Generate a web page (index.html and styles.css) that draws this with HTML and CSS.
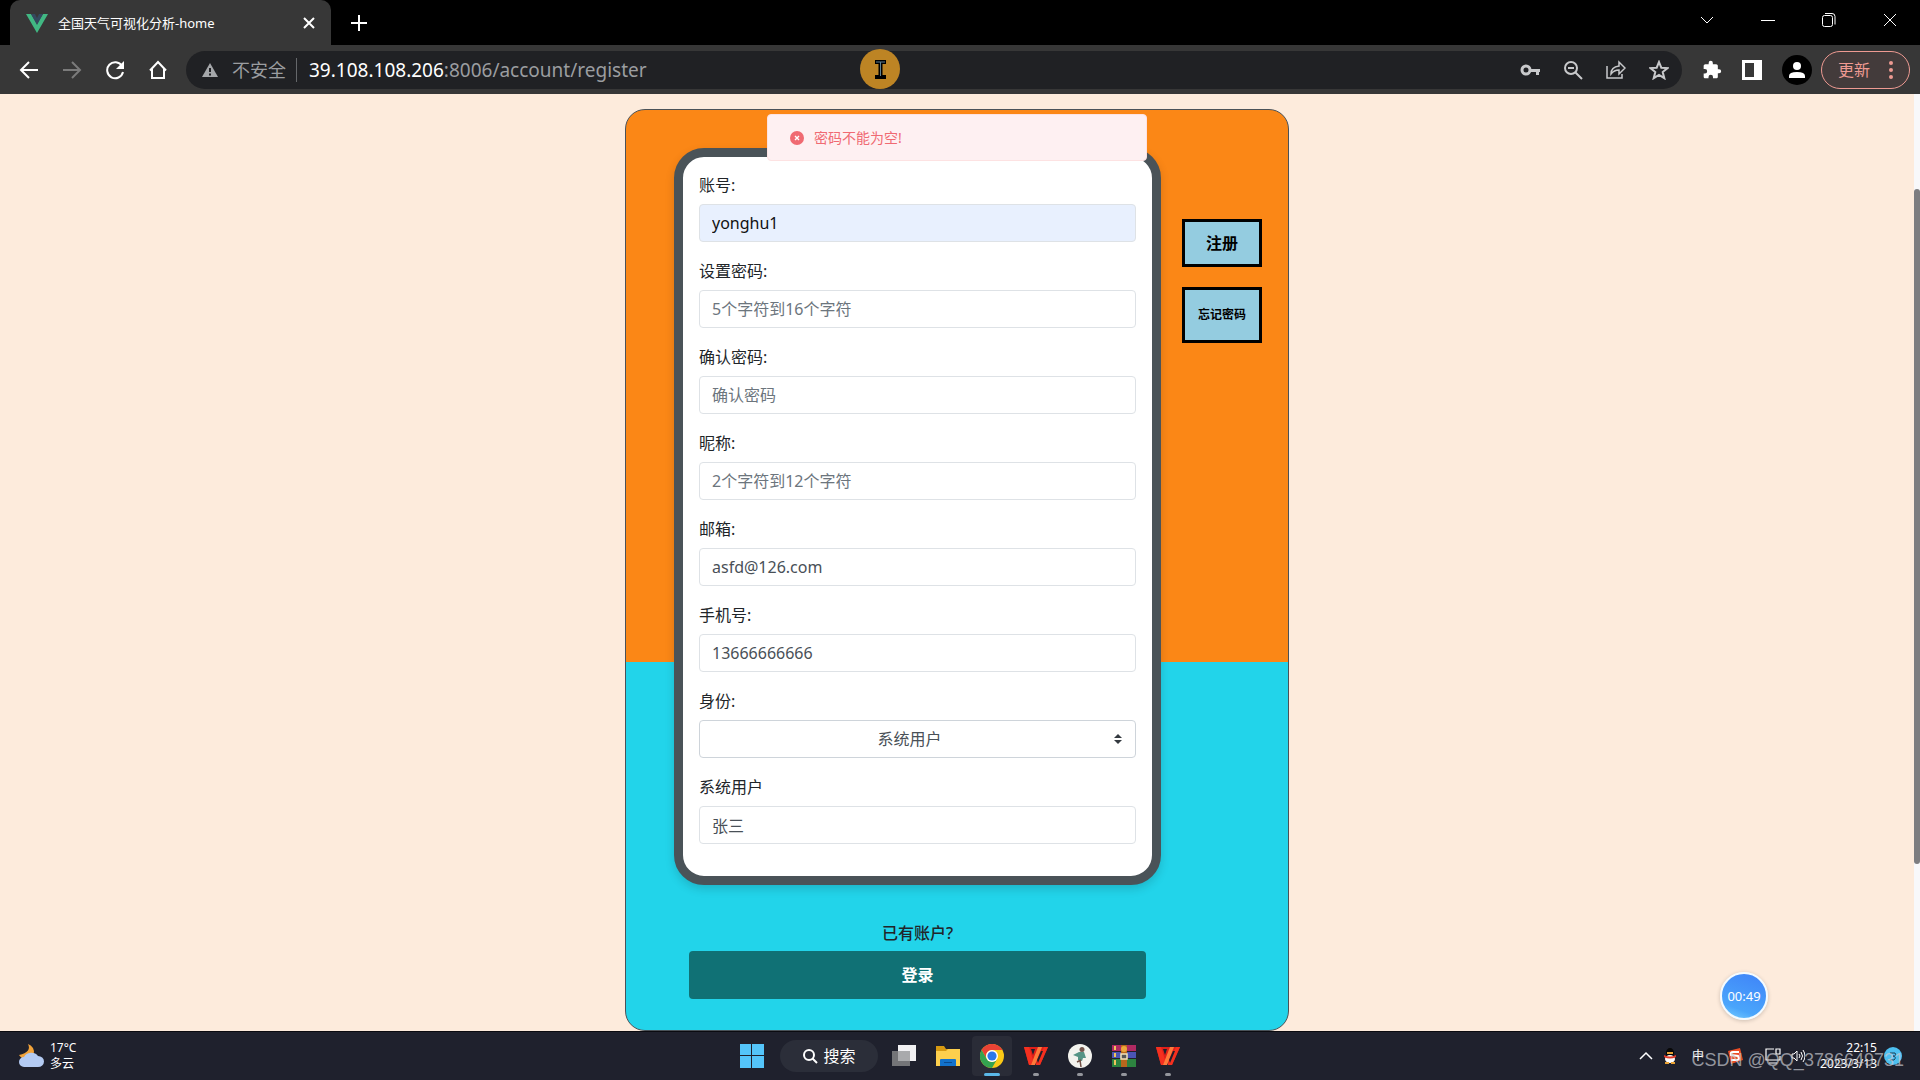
FILE: index.html
```html
<!DOCTYPE html>
<html lang="zh-CN">
<head>
<meta charset="utf-8">
<title>全国天气可视化分析-home</title>
<link rel="stylesheet" href="styles.css">
</head>
<body>
<svg class="defs" aria-hidden="true">
  <symbol id="wps" viewBox="0 0 24 24"><path d="M0 3h24l-8 18h-4l-1-5-2 5H5z" fill="#e0201a"/><path d="M0 3h5l4 13-2 5H5z" fill="#f5301f"/><path d="M7 21 14 3h4l-7 18z" fill="#ff7a3a"/><path d="M12 21 20 3h4l-8 18z" fill="#f5301f"/><path d="M7 5h4L9 11zM17 7l-4 9 1 3 5-12z" fill="#1f212d"/></symbol>
</svg>
<header class="browser">
  <div class="tabstrip">
    <div class="tab">
      <svg width="22" height="20" viewBox="0 0 22 20"><path d="M0 1h5l6 10 6-10h5L11 20z" fill="#41b883"/><path d="M5 1h4l2 4 2-4h4L11 12z" fill="#34495e"/></svg>
      <span class="tab-title">全国天气可视化分析-home</span>
      <button class="icon" aria-label="关闭标签"><svg width="12" height="12" viewBox="0 0 12 12"><path d="M1 1l10 10M11 1 1 11" stroke="#fff" stroke-width="2"/></svg></button>
    </div>
    <button class="icon newtab" aria-label="新标签"><svg width="16" height="16" viewBox="0 0 16 16"><path d="M8 0v16M0 8h16" stroke="#fff" stroke-width="2"/></svg></button>
    <div class="window-buttons">
      <button class="icon" aria-label="标签列表"><svg width="14" height="14" viewBox="0 0 14 14"><path d="M1 4l6 6 6-6"/></svg></button>
      <button class="icon" aria-label="最小化"><svg width="14" height="14" viewBox="0 0 14 14"><path d="M0 7.500h14"/></svg></button>
      <button class="icon" aria-label="还原"><svg width="14" height="14" viewBox="0 0 14 14"><rect x=".5" y="2.500" width="10" height="11" rx="2"/><path d="M3 .5h7q3 0 3 3v8"/></svg></button>
      <button class="icon" aria-label="关闭"><svg width="14" height="14" viewBox="0 0 14 14"><path d="M1 1l12 12M13 1 1 13"/></svg></button>
    </div>
  </div>
  <div class="toolbar">
    <nav class="nav-buttons">
      <button class="icon" aria-label="后退"><svg width="20" height="20" viewBox="0 0 20 20"><path d="M19 10H2M10 2l-8 8 8 8" stroke="#fff" stroke-width="2" fill="none"/></svg></button>
      <button class="icon" aria-label="前进"><svg width="20" height="20" viewBox="0 0 20 20"><path d="M1 10h17M10 2l8 8-8 8" stroke="#7b7b7b" stroke-width="2" fill="none"/></svg></button>
      <button class="icon" aria-label="刷新"><svg width="20" height="20" viewBox="0 0 20 20"><path d="M17 6A8 8 0 1 0 18 12" stroke="#fff" stroke-width="2" fill="none"/><path d="M19 1v8h-8z" fill="#fff"/></svg></button>
      <button class="icon" aria-label="主页"><svg width="20" height="20" viewBox="0 0 20 20"><path d="M2 10.500 10 2l8 8.500M4 9V18h12V9" stroke="#fff" stroke-width="2" fill="none"/></svg></button>
    </nav>
    <div class="omnibox">
      <svg width="16" height="16" viewBox="0 0 16 16"><path d="M8 1l8 14H0z" fill="#a5a7aa"/><path d="M8 6v4M8 11.500v2" stroke="#202124" stroke-width="2"/></svg>
      <span class="insecure">不安全</span>
      <span class="url"><b>39.108.108.206</b>:8006/account/register</span>
      <div class="omni-icons">
        <button class="icon" aria-label="密码"><svg width="20" height="20" viewBox="0 0 20 20"><circle cx="6" cy="10" r="4" fill="none" stroke="#c8c9cb" stroke-width="3"/><path d="M10 9h10v3h-1v3h-3v-3h-6z" fill="#c8c9cb"/></svg></button>
        <button class="icon" aria-label="缩小"><svg width="20" height="20" viewBox="0 0 20 20" fill="none" stroke="#c8c9cb" stroke-width="2"><circle cx="8" cy="8" r="6"/><path d="M12.500 12.500 19 19M5 8h6"/></svg></button>
        <button class="icon" aria-label="分享"><svg width="20" height="20" viewBox="0 0 20 20" fill="none" stroke="#c8c9cb" stroke-width="1.500"><path d="M1 6v12h15v-4M5 14q0-7 8-8V2l6 6-6 6v-4q-5 0-8 4z"/></svg></button>
        <button class="icon" aria-label="收藏"><svg width="20" height="20" viewBox="0 0 20 20" fill="none" stroke="#c8c9cb" stroke-width="2"><path d="M10 2l2.300 5.700 6.200.4-4.800 4 1.600 6.100L10 14.900l-5.300 3.300 1.600-6.100-4.800-4 6.200-.4z"/></svg></button>
      </div>
    </div>
    <div class="tool-icons">
      <button class="icon" aria-label="扩展"><svg width="20" height="20" viewBox="0 0 24 24"><path d="M20.500 11H19V7c0-1.100-.9-2-2-2h-4V3.500a2.500 2.500 0 0 0-5 0V5H4c-1.100 0-2 .9-2 2v3.800h1.500a2.700 2.700 0 0 1 0 5.400H2V20c0 1.100.9 2 2 2h3.800v-1.500a2.700 2.700 0 0 1 5.400 0V22H17c1.100 0 2-.9 2-2v-4h1.500a2.500 2.500 0 0 0 0-5z" fill="#fff"/></svg></button>
      <button class="icon" aria-label="侧边栏"><svg width="20" height="20" viewBox="0 0 20 20"><path d="M0 0h20v20H0zM3 3v14h9V3z" fill="#fff" fill-rule="evenodd"/></svg></button>
      <button class="icon" aria-label="用户"><svg width="30" height="30" viewBox="0 0 30 30"><circle cx="15" cy="15" r="15" fill="#000"/><circle cx="15" cy="11" r="4" fill="#fff"/><path d="M7 23v-2q0-4 8-4t8 4v2z" fill="#fff"/></svg></button>
    </div>
    <button class="update">更新<svg width="4" height="20" viewBox="0 0 4 20" fill="#ee9a92"><circle cx="2" cy="3" r="2"/><circle cx="2" cy="10" r="2"/><circle cx="2" cy="17" r="2"/></svg></button>
  </div>
  <svg class="pointer" width="40" height="40" viewBox="0 0 40 40"><circle cx="20" cy="20" r="20" fill="#bd8424"/><path d="M15 13h11M15 28h11M20.500 13v15" stroke="#000" stroke-width="4"/><path d="M16 13h9M20.500 13v14" stroke="#5d7f93" stroke-width="1"/></svg>
</header>

<div class="viewport">
  <main class="page">
    <div class="message" role="alert">
      <svg width="14" height="14" viewBox="0 0 14 14"><circle cx="7" cy="7" r="7" fill="#f06a72"/><path d="M5 5l4 4M9 5 5 9" stroke="#fff" stroke-width="1.400"/></svg>密码不能为空!
    </div>
    <section class="card">
      <form class="register">
        <div class="phone">
          <label for="account">账号:</label>
          <input id="account" class="filled" type="text" value="yonghu1">
          <label for="password">设置密码:</label>
          <input id="password" type="password" placeholder="5个字符到16个字符">
          <label for="confirm">确认密码:</label>
          <input id="confirm" type="password" placeholder="确认密码">
          <label for="nickname">昵称:</label>
          <input id="nickname" type="text" placeholder="2个字符到12个字符">
          <label for="email">邮箱:</label>
          <input id="email" type="text" value="asfd@126.com">
          <label for="mobile">手机号:</label>
          <input id="mobile" type="text" value="13666666666">
          <label for="role">身份:</label>
          <div class="select-wrap">
            <select id="role"><option>系统用户</option></select>
            <svg class="caret" width="8" height="10" viewBox="0 0 8 10"><path d="M0 4l4-4 4 4zM0 6l4 4 4-4z" fill="#343a40"/></svg>
          </div>
          <label for="name">系统用户</label>
          <input id="name" type="text" value="张三">
        </div>
        <p class="hint">已有账户?</p>
        <button type="button" class="login">登录</button>
      </form>
      <div class="actions">
        <button class="action">注册</button>
        <button class="action forgot">忘记密码</button>
      </div>
    </section>
    <div class="timer">00:49</div>
  </main>
  <div class="scrollbar"><div class="thumb"></div></div>
</div>

<footer class="taskbar">
  <div class="weather">
    <svg width="26" height="24" viewBox="0 0 26 24"><path d="M10 0q4 8-9 11 4 6 11 3 6-4 3-10-2-3-5-4z" fill="#f2a33a"/><path d="M6 23a5 5 0 0 1 0-10 8 7 0 0 1 14-1 6 5.500 0 0 1 0 11z" fill="#b4cbf3"/></svg>
    <div>17°C<br>多云</div>
  </div>
  <div class="apps">
    <button class="icon app" aria-label="开始"><svg width="24" height="24" viewBox="0 0 24 24"><path d="M0 0h11v11H0zM12 0h12v11H12zM0 12h11v12H0zM12 12h12v12H12z" fill="#54c5fa"/></svg></button>
    <button class="search"><svg width="16" height="16" viewBox="0 0 16 16" fill="none" stroke="#fff" stroke-width="2"><circle cx="7" cy="7" r="5"/><path d="M10.500 10.500 15 15"/></svg>搜索</button>
    <button class="icon app" aria-label="任务视图"><svg width="24" height="24" viewBox="0 0 24 24"><path d="M6 1h18v16H6z" fill="#f1f1f3"/><path d="M0 7h18v15H0z" fill="#747578"/><path d="M6 7h12v10H6z" fill="#a9aaac"/></svg></button>
    <button class="icon app" aria-label="文件"><svg width="24" height="24" viewBox="0 0 24 24"><path d="M0 2h8l2 3h14v4H0z" fill="#d79a12"/><path d="M0 7h10l2-2h12v17H0z" fill="#fccf4d"/><path d="M4 22v-6q0-1 1-1h14q1 0 1 1v6z" fill="#1272cc"/><path d="M8 18h8v1H8z" fill="#0a4b90"/></svg></button>
    <button class="icon app active" aria-label="Chrome"><svg width="24" height="24" viewBox="0 0 24 24"><circle cx="12" cy="12" r="12" fill="#fbc916"/><path d="M1.600 6A12 12 0 0 1 22.400 6H12a6 6 0 0 0-5.200 9z" fill="#e94235"/><path d="M1.600 6A12 12 0 0 0 12 24l5.200-9A6 6 0 0 1 6.800 15z" fill="#34a350"/><circle cx="12" cy="12" r="6" fill="#fff"/><circle cx="12" cy="12" r="4.600" fill="#2c78e8"/></svg></button>
    <button class="icon app open" aria-label="WPS"><svg width="24" height="24"><use href="#wps"/></svg></button>
    <button class="icon app open" aria-label="录屏"><svg width="24" height="24" viewBox="0 0 24 24"><circle cx="12" cy="12" r="12" fill="#f3f3ee"/><circle cx="14" cy="5.500" r="2.500" fill="#74564c"/><path d="M5 11l6-3 5 0 2 6-3 0-1 3-4-1 0-3z" fill="#559485"/><path d="M12 16l1 7M13 16l-4 2" stroke="#705045" stroke-width="1.500"/></svg></button>
    <button class="icon app open" aria-label="WinRAR"><svg width="24" height="24" viewBox="0 0 24 24"><path d="M0 1h24v7H0z" fill="#b02a62"/><path d="M0 8h24v7H0z" fill="#4a55b5"/><path d="M0 15h24v8H0z" fill="#2d8440"/><path d="M0 7h24v1H0zM0 14h24v1H0z" fill="#23202c"/><path d="M2 2h2v4H2zM2 9h2v4H2zM2 16h2v5H2z" fill="#f0c45c"/><path d="M9 1h6v22H9z" fill="#b9671d"/><circle cx="12" cy="5" r="3" fill="#eda83c"/><rect x="9" y="10" width="6" height="5" fill="#555" stroke="#f4e3b8" stroke-width="1.500"/></svg></button>
    <button class="icon app open" aria-label="WPS"><svg width="24" height="24"><use href="#wps"/></svg></button>
  </div>
  <div class="tray">
    <svg width="14" height="14" viewBox="0 0 14 14"><path d="M1 10l6-6 6 6" stroke="#fff" stroke-width="1.500" fill="none"/></svg>
    <svg width="14" height="16" viewBox="0 0 14 16"><ellipse cx="7" cy="5" rx="4" ry="5" fill="#080808"/><ellipse cx="7" cy="11" rx="5" ry="4" fill="#fff"/><path d="M1 7q6 3 12 0v2q-6 3-12 0z" fill="#e33a27"/><path d="M4 4h6v2H4zM2 14h4v2H2zM8 14h4v2H8z" fill="#eba335"/></svg>
    <span class="ime">中</span>
    <svg width="16" height="16" viewBox="0 0 16 16"><path d="M1 3 13 0l3 12-12 4z" fill="#ec4d26"/><path d="M12 4H6Q3 4 4 7l7 1q2 4-1 4H4" stroke="#fff" stroke-width="2" fill="none"/></svg>
    <svg class="monitor" width="16" height="16" viewBox="0 0 16 16" fill="none" stroke="#fff" stroke-width="1.200"><path d="M9 1H1v11h14V8M4 15h8M11 1h4v5h-4z"/></svg>
    <svg width="14" height="14" viewBox="0 0 14 14" fill="none" stroke="#fff"><path d="M1 5h2l3-3v10L3 9H1zM8 5q2 2 0 4M10 3q3 4 0 8M12 1q4 6 0 12"/></svg>
    <time class="clock">22:15<br>2023/3/13</time>
    <svg width="18" height="18" viewBox="0 0 18 18"><circle cx="9" cy="9" r="9" fill="#4dc0f1"/><path d="M6 6h5q2 3-2 3 4 1 1 4H6" stroke="#1d3c52" fill="none"/></svg>
  </div>
  <div class="watermark">CSDN @QQ_3786649731</div>
</footer>
</body>
</html>
```
FILE: styles.css
```css
* { box-sizing: border-box; }

body {
  margin: 0;
  height: 100vh;
  display: flex;
  flex-direction: column;
  overflow: hidden;
  font: 16px/24px "Noto Sans", "Noto Sans CJK SC", sans-serif;
  color: #212529;
}

button, input, select { font: inherit; color: inherit; }
button { padding: 0; border: 0; cursor: pointer; }
svg { display: block; flex: none; }
.defs { position: absolute; width: 0; height: 0; }
.icon { display: flex; align-items: center; justify-content: center; background: none; }

/* Browser frame */
.browser { position: relative; flex: none; color: #fff; }
.tabstrip { display: flex; align-items: stretch; height: 45px; padding-left: 10px; background: #000; }
.tab {
  display: flex;
  align-items: center;
  width: 321px;
  padding: 0 16px;
  gap: 10px;
  border-radius: 10px 10px 0 0;
  background: #373737;
}
.tab-title { flex: 1; font-size: 13px; }
.newtab { margin-left: 20px; }
.window-buttons { display: flex; gap: 47px; margin-left: auto; padding: 0 23px 6px 0; }
.window-buttons svg { fill: none; stroke: #fff; }

.toolbar { display: flex; align-items: center; height: 49px; padding: 0 10px 0 19px; background: #373737; }
.nav-buttons { display: flex; gap: 23px; margin-right: 18px; }
.omnibox {
  flex: 1;
  display: flex;
  align-items: center;
  height: 38px;
  padding: 0 13px 0 16px;
  border-radius: 19px;
  background: #202124;
  color: #9b9da0;
}
.insecure {
  margin-left: 14px;
  padding-right: 10px;
  border-right: 1px solid #65676a;
  font-size: 18px;
}
.url { margin-left: 12px; font-size: 19px; }
.url b { font-weight: 400; color: #fff; }
.omni-icons { display: flex; gap: 23px; margin-left: auto; }
.tool-icons { display: flex; align-items: center; gap: 20px; margin: 0 9px 0 20px; }
.update {
  display: flex;
  align-items: center;
  justify-content: space-between;
  width: 89px;
  height: 38px;
  padding: 0 16px;
  border: 1px solid #ee9a92;
  border-radius: 19px;
  background: #433b3b;
  color: #ee9a92;
}
.pointer { position: absolute; left: 860px; top: 49px; }

/* Page */
.viewport { flex: 1; display: flex; min-height: 0; }
.page {
  position: relative;
  flex: 1;
  padding-top: 15px;
  overflow: hidden;
  background: #fdebdc;
}
.scrollbar { width: 6px; background: #f8f8fa; }
.thumb { height: 72%; margin-top: 95px; border-radius: 3px; background: #7d7d80; }

.card {
  display: flex;
  gap: 21px;
  width: 664px;
  margin: 0 auto;
  padding: 38px 26px 31px 48px;
  border: 1px solid #4a5258;
  border-radius: 20px;
  background: linear-gradient(#fb8716 60%, #22d4ea 60%);
}
.register { flex: 1; display: flex; flex-direction: column; }
.phone {
  display: flex;
  flex-direction: column;
  padding: 16px 16px 14px;
  border: 9px solid #4a5358;
  border-radius: 30px;
  background: #fff;
  box-shadow: 0 4px 10px rgba(0, 0, 0, .15);
}
.phone label { margin-bottom: 7px; }
.phone input, .select-wrap { margin-bottom: 17px; }
.phone input:last-child { margin-bottom: 18px; }
.phone input, .phone select {
  width: 100%;
  height: 38px;
  padding: 0 12px;
  border: 1px solid #dee2e6;
  border-radius: 4px;
  background: #fff;
  color: #495057;
}
.phone input::placeholder { color: #6c757d; opacity: 1; }
.phone input.filled { background: #e8f0fe; color: #111; }
.select-wrap { position: relative; }
.phone select {
  display: block;
  appearance: none;
  padding-right: 28px;
  border-color: #ced4da;
  text-align-last: center;
}
.caret { position: absolute; right: 14px; top: 14px; }
.hint { margin: 36px 0 6px; text-align: center; font-weight: 500; }
.login {
  height: 48px;
  margin: 0 15px;
  border-radius: 4px;
  background: #107175;
  color: #fff;
  font-weight: 700;
}
.actions { display: flex; flex-direction: column; gap: 20px; width: 80px; padding-top: 71px; }
.action {
  height: 48px;
  border: 3px solid #000;
  background: #94cce0;
  color: #000;
  font-weight: 700;
}
.forgot { height: 56px; font-size: 12px; }

.message {
  position: absolute;
  top: 20px;
  left: 50%;
  display: flex;
  align-items: center;
  gap: 10px;
  width: 380px;
  height: 47px;
  margin-left: -190px;
  padding: 0 22px;
  border: 1px solid #fde2e2;
  border-radius: 4px;
  background: #fef0f2;
  color: #f06a72;
  font-size: 14px;
}
.timer {
  position: absolute;
  right: 146px;
  bottom: 11px;
  width: 48px;
  height: 48px;
  border: 2px solid #f4fbff;
  border-radius: 50%;
  background: linear-gradient(200deg, #3f83f8, #4aa5fb 75%, #79d0ff);
  box-shadow: 0 1px 4px rgba(0, 0, 0, .2);
  color: #fff;
  font-size: 13px;
  line-height: 44px;
  text-align: center;
}

/* Taskbar */
.taskbar {
  position: relative;
  flex: none;
  display: grid;
  grid-template-columns: 1fr auto 1fr;
  align-items: center;
  height: 49px;
  padding: 0 18px;
  border-top: 1px solid #0b0b10;
  background: #1f212d;
  color: #fff;
  font-size: 12px;
  line-height: 16px;
}
.weather { display: flex; align-items: center; gap: 6px; }
.apps { display: flex; align-items: center; gap: 4px; }
.app { position: relative; width: 40px; height: 40px; border-radius: 4px; }
.app.active { background: #2a2c37; }
.app.open::after, .app.active::after {
  content: "";
  position: absolute;
  bottom: 0;
  width: 6px;
  height: 3px;
  border-radius: 2px;
  background: #94969c;
}
.app.active::after { width: 16px; background: #5bb8e8; }
.search {
  display: flex;
  align-items: center;
  justify-content: center;
  gap: 5px;
  width: 98px;
  height: 32px;
  margin: 0 2px 0 4px;
  border-radius: 16px;
  background: #2b2e39;
  font-size: 16px;
}
.tray { display: flex; align-items: center; justify-content: flex-end; }
.tray svg { margin-left: 10px; }
.ime { margin-left: 15px; }
.ime + svg { margin-left: 23px; }
.tray .monitor { margin-left: 22px; }
.clock { width: 72px; text-align: right; }
.clock + svg { margin-left: 7px; }
.watermark {
  position: absolute;
  right: 16px;
  bottom: 8px;
  color: rgba(200, 202, 208, .7);
  font: 18px/24px "Liberation Sans", sans-serif;
}
```
